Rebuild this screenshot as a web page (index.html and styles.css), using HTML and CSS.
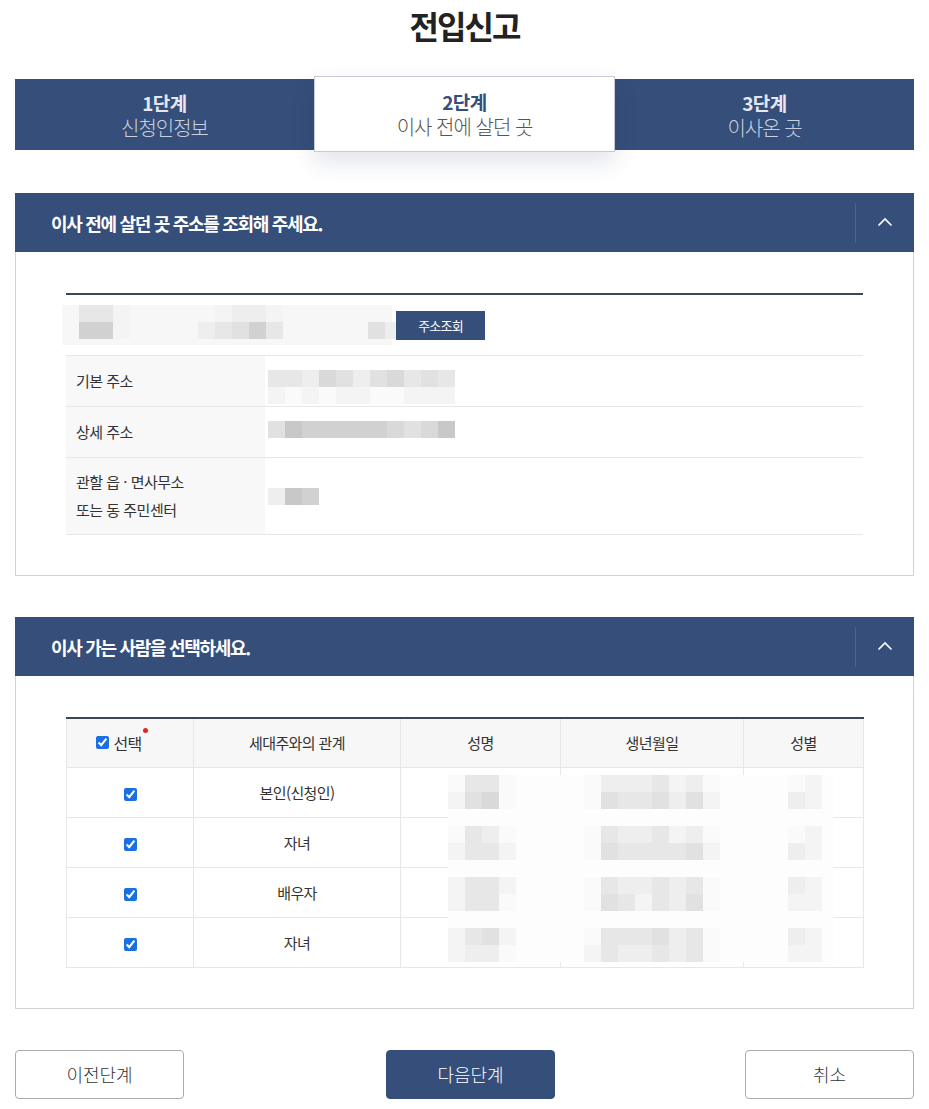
FILE: index.html
```html
<!DOCTYPE html>
<html lang="ko">
<head>
<meta charset="utf-8">
<title>전입신고</title>
<link rel="stylesheet" href="styles.css">
</head>
<body>
<h1 class="title">전입신고</h1>

<div class="steps">
  <div class="step"><strong>1단계</strong><span>신청인정보</span></div>
  <div class="step active"><strong>2단계</strong><span>이사 전에 살던 곳</span></div>
  <div class="step"><strong>3단계</strong><span>이사온 곳</span></div>
</div>

<section class="panel first">
  <div class="panel-head">
    <h2>이사 전에 살던 곳 주소를 조회해 주세요.</h2>
    <button class="toggle" type="button" aria-label="접기">
      <svg width="16" height="10" viewBox="0 0 16 10"><polyline points="1.5,8.5 8,2 14.5,8.5" fill="none" stroke="#fff" stroke-width="1.6"/></svg>
    </button>
  </div>
  <div class="panel-body">
    <div class="rule"></div>
    <div class="search">
      <div class="addr-input mz">
        <div class="mr"><i class="z"></i><i class="d"></i><i class="d"></i><i class="b"></i><i class="z"></i><i class="z"></i><i class="z"></i><i class="z"></i><i class="z"></i><i class="b"></i><i class="c"></i><i class="c"></i><i class="b"></i></div>
        <div class="mr"><i class="z"></i><i class="g"></i><i class="g"></i><i class="b"></i><i class="z"></i><i class="z"></i><i class="z"></i><i class="z"></i><i class="c"></i><i class="d"></i><i class="e"></i><i class="g"></i><i class="d"></i><i class="z"></i><i class="z"></i><i class="z"></i><i class="z"></i><i class="z"></i><i class="e"></i><i class="c"></i></div>
      </div>
      <button class="btn-search" type="button">주소조회</button>
    </div>
    <table class="info">
      <tr>
        <th>기본 주소</th>
        <td class="top">
          <div class="mz">
            <div class="mr"><i class="d"></i><i class="d"></i><i class="c"></i><i class="f"></i><i class="e"></i><i class="c"></i><i class="e"></i><i class="f"></i><i class="d"></i><i class="e"></i><i class="d"></i></div>
            <div class="mr"><i class="b"></i><i class="a"></i><i class="b"></i><i class="a"></i><i class="b"></i><i class="b"></i><i class="a"></i><i class="a"></i><i class="b"></i><i class="b"></i><i class="b"></i></div>
          </div>
        </td>
      </tr>
      <tr>
        <th>상세 주소</th>
        <td class="top">
          <div class="mz">
            <div class="mr"><i class="e"></i><i class="h"></i><i class="g"></i><i class="g"></i><i class="g"></i><i class="g"></i><i class="g"></i><i class="f"></i><i class="e"></i><i class="f"></i><i class="h"></i></div>
          </div>
        </td>
      </tr>
      <tr class="tall">
        <th>관할 읍 · 면사무소<br>또는 동 주민센터</th>
        <td>
          <div class="mz">
            <div class="mr"><i class="c"></i><i class="h"></i><i class="g"></i></div>
          </div>
        </td>
      </tr>
    </table>
  </div>
</section>

<section class="panel second">
  <div class="panel-head">
    <h2>이사 가는 사람을 선택하세요.</h2>
    <button class="toggle" type="button" aria-label="접기">
      <svg width="16" height="10" viewBox="0 0 16 10"><polyline points="1.5,8.5 8,2 14.5,8.5" fill="none" stroke="#fff" stroke-width="1.6"/></svg>
    </button>
  </div>
  <div class="panel-body">
    <div class="people-wrap">
      <table class="people">
        <colgroup>
          <col class="c1"><col class="c2"><col class="c3"><col class="c4"><col class="c5">
        </colgroup>
        <thead>
          <tr>
            <th class="sel"><label class="all"><input type="checkbox" checked><span class="req">선택</span></label></th>
            <th>세대주와의 관계</th>
            <th>성명</th>
            <th>생년월일</th>
            <th>성별</th>
          </tr>
        </thead>
        <tbody>
          <tr><td><input type="checkbox" checked></td><td>본인(신청인)</td><td></td><td></td><td></td></tr>
          <tr><td><input type="checkbox" checked></td><td>자녀</td><td></td><td></td><td></td></tr>
          <tr><td><input type="checkbox" checked></td><td>배우자</td><td></td><td></td><td></td></tr>
          <tr><td><input type="checkbox" checked></td><td>자녀</td><td></td><td></td><td></td></tr>
        </tbody>
      </table>
      <div class="mask mz">
        <div class="mr"><i class="a"></i><i class="d"></i><i class="d"></i><i class="a"></i><i class="gap"></i><i class="a"></i><i class="c"></i><i class="c"></i><i class="c"></i><i class="d"></i><i class="b"></i><i class="c"></i><i class="a"></i><i class="gap"></i><i class="a"></i><i class="b"></i></div>
        <div class="mr"><i class="b"></i><i class="e"></i><i class="f"></i><i class="a"></i><i class="gap"></i><i class="a"></i><i class="e"></i><i class="d"></i><i class="d"></i><i class="e"></i><i class="c"></i><i class="e"></i><i class="b"></i><i class="gap"></i><i class="c"></i><i class="b"></i></div>
        <div class="mr"></div>
        <div class="mr"><i class="a"></i><i class="d"></i><i class="c"></i><i class="a"></i><i class="gap"></i><i class="a"></i><i class="d"></i><i class="c"></i><i class="c"></i><i class="d"></i><i class="b"></i><i class="c"></i><i class="a"></i><i class="gap"></i><i class="a"></i><i class="b"></i></div>
        <div class="mr"><i class="b"></i><i class="d"></i><i class="d"></i><i class="b"></i><i class="gap"></i><i class="a"></i><i class="e"></i><i class="d"></i><i class="d"></i><i class="d"></i><i class="d"></i><i class="e"></i><i class="b"></i><i class="gap"></i><i class="c"></i><i class="b"></i></div>
        <div class="mr"></div>
        <div class="mr"><i class="b"></i><i class="d"></i><i class="d"></i><i class="b"></i><i class="gap"></i><i class="a"></i><i class="d"></i><i class="c"></i><i class="c"></i><i class="d"></i><i class="c"></i><i class="d"></i><i class="a"></i><i class="gap"></i><i class="c"></i><i class="b"></i></div>
        <div class="mr"><i class="b"></i><i class="d"></i><i class="d"></i><i class="a"></i><i class="gap"></i><i class="a"></i><i class="e"></i><i class="d"></i><i class="b"></i><i class="d"></i><i class="c"></i><i class="e"></i><i class="a"></i><i class="gap"></i><i class="b"></i><i class="b"></i></div>
        <div class="mr"></div>
        <div class="mr"><i class="b"></i><i class="d"></i><i class="e"></i><i class="b"></i><i class="gap"></i><i class="a"></i><i class="d"></i><i class="d"></i><i class="d"></i><i class="e"></i><i class="c"></i><i class="d"></i><i class="a"></i><i class="gap"></i><i class="c"></i><i class="b"></i></div>
        <div class="mr"><i class="b"></i><i class="c"></i><i class="c"></i><i class="a"></i><i class="gap"></i><i class="b"></i><i class="d"></i><i class="c"></i><i class="c"></i><i class="d"></i><i class="c"></i><i class="d"></i><i class="a"></i><i class="gap"></i><i class="b"></i><i class="b"></i></div>
      </div>
    </div>
  </div>
</section>

<div class="actions">
  <button class="btn" type="button">이전단계</button>
  <button class="btn primary" type="button">다음단계</button>
  <button class="btn" type="button">취소</button>
</div>
</body>
</html>
```
FILE: styles.css
```css
* { box-sizing: border-box; }
html, body { background: #fff; }
body {
  margin: 0;
  padding: 0 15px 11px;
  font-family: "Noto Sans CJK KR", "Noto Sans", sans-serif;
  color: #333;
}
button { font-family: inherit; cursor: pointer; }

.title {
  margin: 0;
  height: 50px;
  line-height: 50px;
  text-align: center;
  font-size: 32px;
  font-weight: 700;
  letter-spacing: -2px;
  color: #222;
}

.steps {
  display: flex;
  margin-top: 29px;
  height: 71px;
  background: #354e7a;
}
.step {
  flex: 1;
  display: flex;
  flex-direction: column;
  align-items: center;
  justify-content: center;
  line-height: 25px;
}
.step strong {
  font-size: 19px;
  font-weight: 700;
  letter-spacing: -0.5px;
  color: #e3e8f0;
}
.step span {
  font-size: 20px;
  font-weight: 300;
  letter-spacing: -1px;
  color: #c9d1df;
}
.step.active {
  margin: -3px 0 -2px;
  background: #fff;
  border: 1px solid #c6cbd6;
  box-shadow: 0 10px 22px rgba(30, 45, 80, 0.13);
  position: relative;
  z-index: 1;
}
.step.active strong { color: #354e7a; }
.step.active span { color: #555; }

.panel.first { margin-top: 43px; }
.panel.second { margin-top: 41px; }
.panel-head {
  display: flex;
  align-items: center;
  height: 59px;
  background: #354e7a;
}
.panel-head h2 {
  flex: 1;
  margin: 0;
  padding-left: 36px;
  font-size: 18px;
  font-weight: 700;
  letter-spacing: -1.3px;
  color: #fff;
}
.toggle {
  width: 59px;
  height: 40px;
  padding: 0;
  border: 0;
  border-left: 1px solid #4b6390;
  background: transparent;
  display: flex;
  align-items: center;
  justify-content: center;
}
.toggle svg { display: block; margin-top: -2px; }

.panel-body {
  border: 1px solid #d2d2d2;
  border-top: 0;
  padding: 41px 50px 40px;
}

.rule { height: 2px; background: #3b4757; }

.search {
  display: flex;
  align-items: center;
  gap: 4px;
  margin-top: 10px;
  margin-left: -4px;
}
.addr-input {
  width: 330px;
  height: 40px;
  background: #f7f7f7;
}
.btn-search {
  width: 89px;
  height: 29px;
  border: 0;
  background: #354e7a;
  color: #fff;
  font-size: 13px;
  letter-spacing: -0.8px;
  padding: 0;
}

/* mosaic (privacy blur) */
.mz { display: flex; flex-direction: column; }
.mr { display: flex; height: 17px; }
.mr i { display: block; width: 17px; height: 17px; flex: none; }
.mr i.z { background: transparent; }
.mr i.a { background: #fafafa; }
.mr i.b { background: #f4f4f4; }
.mr i.c { background: #eeeeee; }
.mr i.d { background: #e7e7e7; }
.mr i.e { background: #e1e1e1; }
.mr i.f { background: #d9d9d9; }
.mr i.g { background: #d1d1d1; }
.mr i.h { background: #c8c8c8; }
.mr i.gap { width: 68px; }

.info {
  width: 100%;
  margin-top: 10px;
  border-collapse: collapse;
}
.info tr { height: 51px; border-top: 1px solid #e7e7e7; border-bottom: 1px solid #e7e7e7; }
.info tr.tall { height: 77px; }
.info th {
  width: 199px;
  padding: 0 10px;
  background: #f8f8f8;
  text-align: left;
  font-weight: 400;
  font-size: 15px;
  letter-spacing: -0.5px;
  line-height: 28px;
  color: #333;
}
.info td { padding: 0 0 0 3px; vertical-align: middle; }
.info td.top { vertical-align: top; padding-top: 14px; }

.people-wrap { position: relative; }
.people {
  width: 100%;
  border-collapse: collapse;
  table-layout: fixed;
  border-top: 2px solid #3b4757;
}
.people col.c1 { width: 127px; }
.people col.c2 { width: 207px; }
.people col.c3 { width: 160px; }
.people col.c4 { width: 183px; }
.people col.c5 { width: 120px; }
.people th, .people td {
  border: 1px solid #e7e7e7;
  text-align: center;
  font-size: 15px;
  letter-spacing: -0.6px;
  color: #333;
  padding: 0;
}
.people thead tr { height: 49px; }
.people thead th {
  border-top: 0;
  background: #f7f7f7;
  font-weight: 400;
}
.people thead th.sel { padding-right: 22px; }
.people tbody tr { height: 50px; }
.people input[type="checkbox"] {
  width: 13px;
  height: 13px;
  margin: 0;
  vertical-align: middle;
  accent-color: #1a6fe3;
}
.all { display: inline-flex; align-items: center; gap: 4px; font-size: 16px; }
.req { position: relative; }
.req::after {
  content: "";
  position: absolute;
  right: -6px;
  top: -3px;
  width: 5px;
  height: 5px;
  border-radius: 50%;
  background: #e0242a;
}

.mask {
  position: absolute;
  left: 382px;
  top: 58px;
  width: 385px;
  height: 187px;
  background: #fdfdfd;
}

.actions {
  display: flex;
  justify-content: space-between;
  margin-top: 41px;
}
.btn {
  width: 169px;
  height: 49px;
  border: 1px solid #ababab;
  border-radius: 4px;
  background: #fff;
  font-size: 18px;
  font-weight: 300;
  letter-spacing: 0;
  color: #333;
  padding: 0;
}
.btn.primary {
  margin-left: 12px;
  border-color: #354e7a;
  background: #354e7a;
  color: #fff;
}
```
